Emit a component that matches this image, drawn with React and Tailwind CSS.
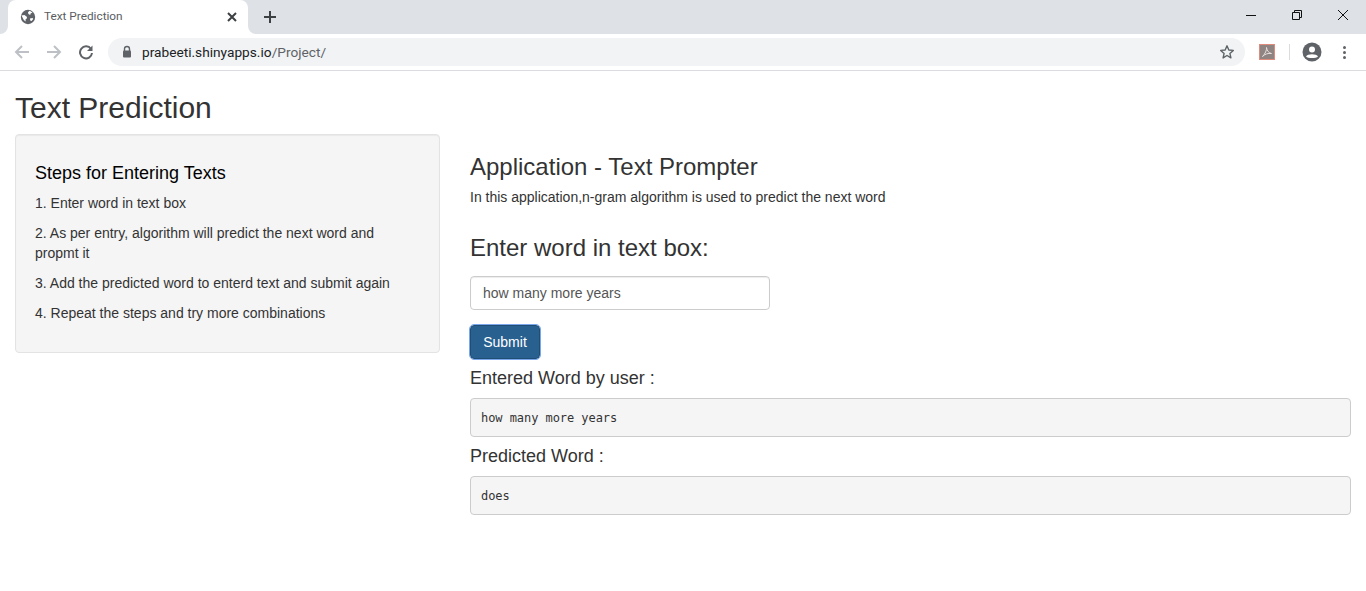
import React from "react";

const sans = "font-['Liberation_Sans',Arial,sans-serif]";

function Globe() {
  return (
    <svg width="16" height="16" viewBox="0 0 16 16" className="shrink-0">
      <circle cx="8" cy="8" r="7.2" fill="#5f6368" />
      <path d="M1.5 6.5 L4.5 6 L7 8 L6.8 9.6 L5.6 10.2 L5.6 12.4 L3.8 11 Z M9.6 1.8 L12.5 3.4 L10.6 4.6 L10.2 6 L8.4 5 L8 3.2 Z M10 9.4 L12.6 9 L13.2 10 L11.6 12 L10.2 11.6 Z" fill="#ffffff" />
    </svg>
  );
}

function ChromeBar() {
  return (
    <div className="flex flex-col shrink-0">
      <div className="h-[34px] bg-[#dee1e6] flex items-start relative">
        <div className="ml-2 w-[240px] h-[34px] bg-white rounded-t-lg flex items-center pl-[12px] pr-[8px] relative">
          <svg width="8" height="8" viewBox="0 0 8 8" className="absolute left-[-8px] bottom-0"><path d="M8 0 V8 H0 A8 8 0 0 0 8 0 Z" fill="#ffffff" /></svg>
          <svg width="8" height="8" viewBox="0 0 8 8" className="absolute right-[-8px] bottom-0"><path d="M0 0 V8 H8 A8 8 0 0 1 0 0 Z" fill="#ffffff" /></svg>
          <Globe />
          <span className="ml-[8px] text-[11.8px] text-[#5a5d61] font-['Roboto',sans-serif] flex-1 leading-none">Text Prediction</span>
          <svg width="16" height="16" viewBox="0 0 16 16"><path d="M4 4 L12 12 M12 4 L4 12" stroke="#3c4043" strokeWidth="2" fill="none" /></svg>
        </div>
        <div className="ml-[14px] mt-[7px] w-[16px] h-[20px] flex items-center">
          <svg width="16" height="16" viewBox="0 0 16 16"><path d="M8 2 V14 M2 8 H14" stroke="#3c4043" strokeWidth="2" fill="none" /></svg>
        </div>
        <div className="ml-auto flex self-start text-black">
          <div className="w-[46px] h-[30px] flex items-center justify-center">
            <svg width="12" height="12" viewBox="0 0 12 12"><path d="M1 6.5 H11" stroke="#111" strokeWidth="1" /></svg>
          </div>
          <div className="w-[46px] h-[30px] flex items-center justify-center">
            <svg width="12" height="12" viewBox="0 0 12 12"><path d="M1.5 3.5 H8.5 V10.5 H1.5 Z M3.5 3.5 V1.5 H10.5 V8.5 H8.5" stroke="#111" strokeWidth="1" fill="none" /></svg>
          </div>
          <div className="w-[46px] h-[30px] flex items-center justify-center">
            <svg width="12" height="12" viewBox="0 0 12 12"><path d="M1 1 L11 11 M11 1 L1 11" stroke="#111" strokeWidth="1" fill="none" /></svg>
          </div>
        </div>
      </div>
      <div className="h-[36px] bg-white flex items-center relative">
        <div className="w-[108px] flex items-center pl-[14px] gap-[16px] shrink-0">
          <svg width="16" height="16" viewBox="0 0 16 16"><path d="M15 8 H2 M8 2 L2 8 L8 14" stroke="#bdc1c6" strokeWidth="2" fill="none" /></svg>
          <svg width="16" height="16" viewBox="0 0 16 16"><path d="M1 8 H14 M8 2 L14 8 L8 14" stroke="#bdc1c6" strokeWidth="2" fill="none" /></svg>
          <svg width="16" height="16" viewBox="0 0 16 16"><path d="M13 5 A6 6 0 1 0 14 9" stroke="#5f6368" strokeWidth="2" fill="none" /><path d="M14.5 1.5 V7 H9 Z" fill="#5f6368" /></svg>
        </div>
        <div className="w-[1137px] h-[28px] rounded-full bg-[#f1f3f4] flex items-center pl-[13px] pr-[10px] shrink-0">
          <svg width="12" height="14" viewBox="0 0 12 14" className="shrink-0"><path d="M3.5 6 V4 A2.5 2.5 0 0 1 8.5 4 V6" stroke="#5f6368" strokeWidth="1.4" fill="none" /><rect x="2" y="5.5" width="8" height="7" rx="1" fill="#5f6368" /></svg>
          <span className="ml-[9px] text-[13.7px] font-['Roboto',sans-serif] text-[#202124] flex-1">prabeeti.shinyapps.io<span className="text-[#5f6368]">/Project/</span></span>
          <svg width="16" height="16" viewBox="0 0 16 16"><path d="M8 1.8 L9.8 6 L14.3 6.4 L10.9 9.4 L11.9 13.9 L8 11.5 L4.1 13.9 L5.1 9.4 L1.7 6.4 L6.2 6 Z" stroke="#5f6368" strokeWidth="1.4" fill="none" strokeLinejoin="round" /></svg>
        </div>
        <div className="ml-[14px] w-[16px] h-[16px] bg-[#8f8482] border border-[#e08a7c] flex items-center justify-center shrink-0">
          <svg width="12" height="12" viewBox="0 0 12 12"><path d="M1.5 10.5 C4 8 6 4 5.5 1.5 C6 5 8 7 10.5 7.5 C7 7 4 8 1.5 10.5 Z" stroke="#e4dfde" strokeWidth="1" fill="none" /></svg>
        </div>
        <div className="ml-[14px] w-px h-[16px] bg-[#dadce0] shrink-0" />
        <svg width="20" height="20" viewBox="0 0 20 20" className="ml-[12px] shrink-0"><circle cx="10" cy="10" r="9.5" fill="#5f6368" /><circle cx="10" cy="7.5" r="3" fill="#fff" /><path d="M4 14.5 C5.5 11.5 14.5 11.5 16 14.5 C14 16.5 6 16.5 4 14.5 Z" fill="#fff" /></svg>
        <div className="ml-[21px] flex flex-col gap-[2px] shrink-0">
          <div className="w-[3px] h-[3px] rounded-full bg-[#5f6368]" />
          <div className="w-[3px] h-[3px] rounded-full bg-[#5f6368]" />
          <div className="w-[3px] h-[3px] rounded-full bg-[#5f6368]" />
        </div>
      </div>
      <div className="h-px bg-[#dadce0]" />
    </div>
  );
}

function Output({ children }) {
  return (
    <pre className="h-[39px] mb-[9px] px-[10px] py-[9.5px] bg-[#f5f5f5] border border-[#cccccc] rounded text-[#333] font-['DejaVu_Sans_Mono',monospace] text-[12px] tracking-[-0.06px] leading-[18px]">{children}</pre>
  );
}

export default function App() {
  return (
    <div className={`min-h-[591px] bg-white text-[#333] text-[14px] leading-[20px] flex flex-col ${sans}`}>
      <ChromeBar />
      <div className="px-[15px]">
        <h2 className="text-[30px] leading-[33px] font-normal mt-[20px] mb-[10px]">Text Prediction</h2>
        <div className="flex gap-[30px] items-start">
          <div className="w-[425px] shrink-0 bg-[#f5f5f5] border border-[#e3e3e3] rounded p-[19px] shadow-[inset_0_1px_1px_rgba(0,0,0,0.05)]">
            <h4 className="text-[18px] leading-[20px] font-normal text-black mt-[9px] mb-[10px]">Steps for Entering Texts</h4>
            <p className="mb-[10px]">1. Enter word in text box</p>
            <p className="mb-[10px]">2. As per entry, algorithm will predict the next word and propmt it</p>
            <p className="mb-[10px]">3. Add the predicted word to enterd text and submit again</p>
            <p className="mb-[10px]">4. Repeat the steps and try more combinations</p>
          </div>
          <div className="flex-1 min-w-0">
            <h3 className="text-[24px] leading-[26px] font-normal mt-[20px] mb-[7px]">Application - Text Prompter</h3>
            <p className="mb-[28px]">In this application,n-gram algorithm is used to predict the next word</p>
            <h3 className="text-[24px] leading-[26px] font-normal mb-[15px]">Enter word in text box:</h3>
            <input
              readOnly
              value="how many more years"
              className="block w-[300px] h-[34px] px-[12px] py-[6px] bg-white border border-[#cccccc] rounded text-[14px] text-[#555] mb-[15px] outline-none shadow-[inset_0_1px_1px_rgba(0,0,0,0.075)]"
            />
            <button className="block h-[34px] w-[70px] bg-[#286090] text-white border border-[#204d74] rounded text-[14px] outline outline-1 outline-[#7aa7ec] mb-[9px]">Submit</button>
            <h4 className="text-[18px] leading-[20px] font-normal mb-[10px]">Entered Word by user :</h4>
            <Output>how many more years</Output>
            <h4 className="text-[18px] leading-[20px] font-normal mb-[10px]">Predicted Word :</h4>
            <Output>does</Output>
          </div>
        </div>
      </div>
    </div>
  );
}
